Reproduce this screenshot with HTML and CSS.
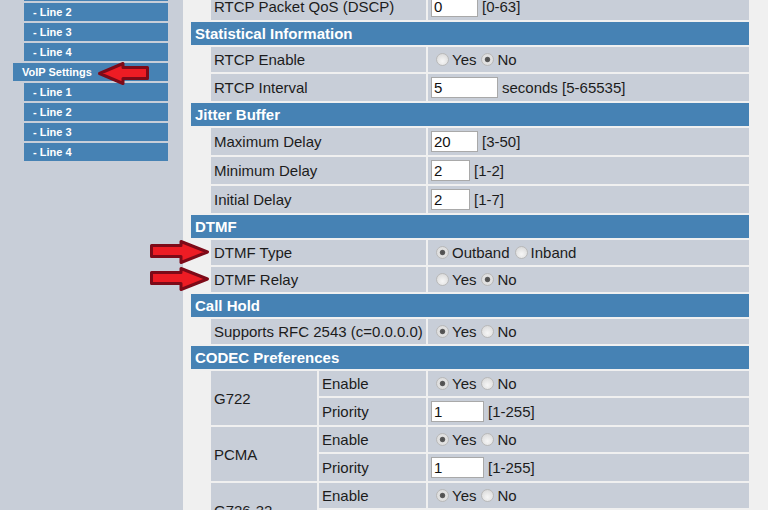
FILE: index.html
```html
<!DOCTYPE html>
<html>
<head>
<meta charset="utf-8">
<link rel="stylesheet" href="styles.css">
</head>
<body>
<div class="page">
  <nav class="sidebar">
    <ul class="menu">
      <li class="item item-sub">- Line 1</li>
      <li class="item item-sub">- Line 2</li>
      <li class="item item-sub">- Line 3</li>
      <li class="item item-sub">- Line 4</li>
      <li class="item item-main">VoIP Settings</li>
      <li class="item item-sub">- Line 1</li>
      <li class="item item-sub">- Line 2</li>
      <li class="item item-sub">- Line 3</li>
      <li class="item item-sub">- Line 4</li>
    </ul>
  </nav>
  <main class="content">
    <div class="form-grid">
      <div class="lbl">RTCP Packet QoS (DSCP)</div>
      <div class="val inp"><input class="field w47" type="text" value="0"><span class="hint">[0-63]</span></div>

      <div class="sec">Statistical Information</div>
      <div class="lbl">RTCP Enable</div>
      <div class="val"><label class="opt"><input class="radio" type="radio" name="rtcp">Yes</label><label class="opt"><input class="radio" type="radio" name="rtcp" checked>No</label></div>
      <div class="lbl">RTCP Interval</div>
      <div class="val inp"><input class="field w67" type="text" value="5"><span class="hint">seconds [5-65535]</span></div>

      <div class="sec">Jitter Buffer</div>
      <div class="lbl">Maximum Delay</div>
      <div class="val inp"><input class="field w47" type="text" value="20"><span class="hint">[3-50]</span></div>
      <div class="lbl">Minimum Delay</div>
      <div class="val inp"><input class="field w39" type="text" value="2"><span class="hint">[1-2]</span></div>
      <div class="lbl">Initial Delay</div>
      <div class="val inp"><input class="field w39" type="text" value="2"><span class="hint">[1-7]</span></div>

      <div class="sec">DTMF</div>
      <div class="lbl">DTMF Type</div>
      <div class="val"><label class="opt"><input class="radio" type="radio" name="dtype" checked>Outband</label><label class="opt"><input class="radio" type="radio" name="dtype">Inband</label></div>
      <div class="lbl">DTMF Relay</div>
      <div class="val"><label class="opt"><input class="radio" type="radio" name="relay">Yes</label><label class="opt"><input class="radio" type="radio" name="relay" checked>No</label></div>

      <div class="sec">Call Hold</div>
      <div class="lbl">Supports RFC 2543 (c=0.0.0.0)</div>
      <div class="val"><label class="opt"><input class="radio" type="radio" name="hold" checked>Yes</label><label class="opt"><input class="radio" type="radio" name="hold">No</label></div>

      <div class="sec">CODEC Preferences</div>
      <div class="codec">G722</div>
      <div class="sublbl">Enable</div>
      <div class="val"><label class="opt"><input class="radio" type="radio" name="g722" checked>Yes</label><label class="opt"><input class="radio" type="radio" name="g722">No</label></div>
      <div class="sublbl">Priority</div>
      <div class="val inp"><input class="field w53" type="text" value="1"><span class="hint">[1-255]</span></div>

      <div class="codec">PCMA</div>
      <div class="sublbl">Enable</div>
      <div class="val"><label class="opt"><input class="radio" type="radio" name="pcma" checked>Yes</label><label class="opt"><input class="radio" type="radio" name="pcma">No</label></div>
      <div class="sublbl">Priority</div>
      <div class="val inp"><input class="field w53" type="text" value="1"><span class="hint">[1-255]</span></div>

      <div class="codec">G726-32</div>
      <div class="sublbl">Enable</div>
      <div class="val"><label class="opt"><input class="radio" type="radio" name="g726" checked>Yes</label><label class="opt"><input class="radio" type="radio" name="g726">No</label></div>
      <div class="sublbl">Priority</div>
      <div class="val inp"><input class="field w53" type="text" value="1"><span class="hint">[1-255]</span></div>
    </div>
  </main>
</div>

<svg class="arrow arrow-menu" width="54" height="26" viewBox="0 0 54 26">
  <polygon points="2.5,12.5 26,2.5 26,6.5 50.5,6.5 50.5,17.5 26,17.5 26,22.5" />
</svg>
<svg class="arrow arrow-type" width="62" height="26" viewBox="0 0 62 26">
  <polygon points="2.5,6.5 32,6.5 32,2.5 58.5,13 32,23.5 32,17.5 2.5,17.5" />
</svg>
<svg class="arrow arrow-relay" width="62" height="26" viewBox="0 0 62 26">
  <polygon points="2.5,6.5 32,6.5 32,2.5 58.5,13 32,23.5 32,17.5 2.5,17.5" />
</svg>
</body>
</html>
```
FILE: styles.css
```css
html, body {
  margin: 0;
  padding: 0;
  height: 100%;
  overflow: hidden;
}

body {
  background: #f0f0f0;
  font-family: "Liberation Sans", Arial, sans-serif;
  font-size: 15px;
  color: #1c1c1c;
  position: relative;
}

.page {
  display: flex;
  height: 100%;
}

.sidebar {
  width: 183px;
  flex: none;
  background: #c8ced8;
}

.menu {
  list-style: none;
  margin: -17px 0 0 0;
  padding: 0;
  display: flex;
  flex-direction: column;
  gap: 2px;
}

.item {
  height: 18px;
  background: #4682b4;
  color: #ffffff;
  font-weight: bold;
  font-size: 11px;
  display: flex;
  align-items: center;
  padding-left: 9px;
  box-sizing: border-box;
}

.item-sub {
  margin-left: 24px;
  width: 144px;
}

.item-main {
  margin-left: 13px;
  width: 155px;
}

.content {
  flex: 1;
  padding-left: 8px;
}

.form-grid {
  display: grid;
  grid-template-columns: 18px 106px 107px 321px;
  gap: 2px;
  margin-top: -7px;
  width: 558px;
}

.sec {
  grid-column: 1 / -1;
  height: 23px;
  background: #4682b4;
  color: #ffffff;
  font-weight: bold;
  display: flex;
  align-items: center;
  padding-left: 4px;
}

.lbl, .val, .codec, .sublbl {
  background: #c8ced8;
  display: flex;
  align-items: center;
  padding-left: 3px;
}

.lbl {
  grid-column: 2 / 4;
}

.codec {
  grid-column: 2;
  grid-row: span 2;
}

.sublbl {
  grid-column: 3;
}

.val {
  grid-column: 4;
  height: 25px;
}

.val.inp {
  height: 27px;
}

.opt {
  display: inline-flex;
  align-items: center;
}

.radio {
  -webkit-appearance: none;
  appearance: none;
  width: 13px;
  height: 13px;
  margin: 0 3px 0 5px;
  border: 1px solid #b9b9b9;
  border-radius: 50%;
  box-sizing: border-box;
  background: radial-gradient(circle at 50% 65%, #f6f6f6 0, #e4e4e4 55%, #d2d2d2 100%);
}

.radio:checked {
  background: radial-gradient(circle at 50% 50%, #4d4d4d 0, #5a5a5a 2.2px, #e2e2e2 3.2px, #dadada 100%);
}

.field {
  height: 21px;
  box-sizing: border-box;
  border: 1px solid #a9a9a9;
  background: #ffffff;
  font-family: "Liberation Sans", Arial, sans-serif;
  font-size: 15px;
  color: #111111;
  padding: 0 2px;
  margin: 0;
}

.w39 { width: 39px; }
.w47 { width: 47px; }
.w53 { width: 53px; }
.w67 { width: 67px; }

.hint {
  margin-left: 4px;
}

.arrow {
  position: absolute;
}

.arrow polygon {
  fill: #ed1c24;
  stroke: #7d0a18;
  stroke-width: 3;
  stroke-linejoin: round;
}

.arrow-menu {
  left: 97px;
  top: 61px;
}

.arrow-type {
  left: 149px;
  top: 239px;
}

.arrow-relay {
  left: 149px;
  top: 266px;
}
```
